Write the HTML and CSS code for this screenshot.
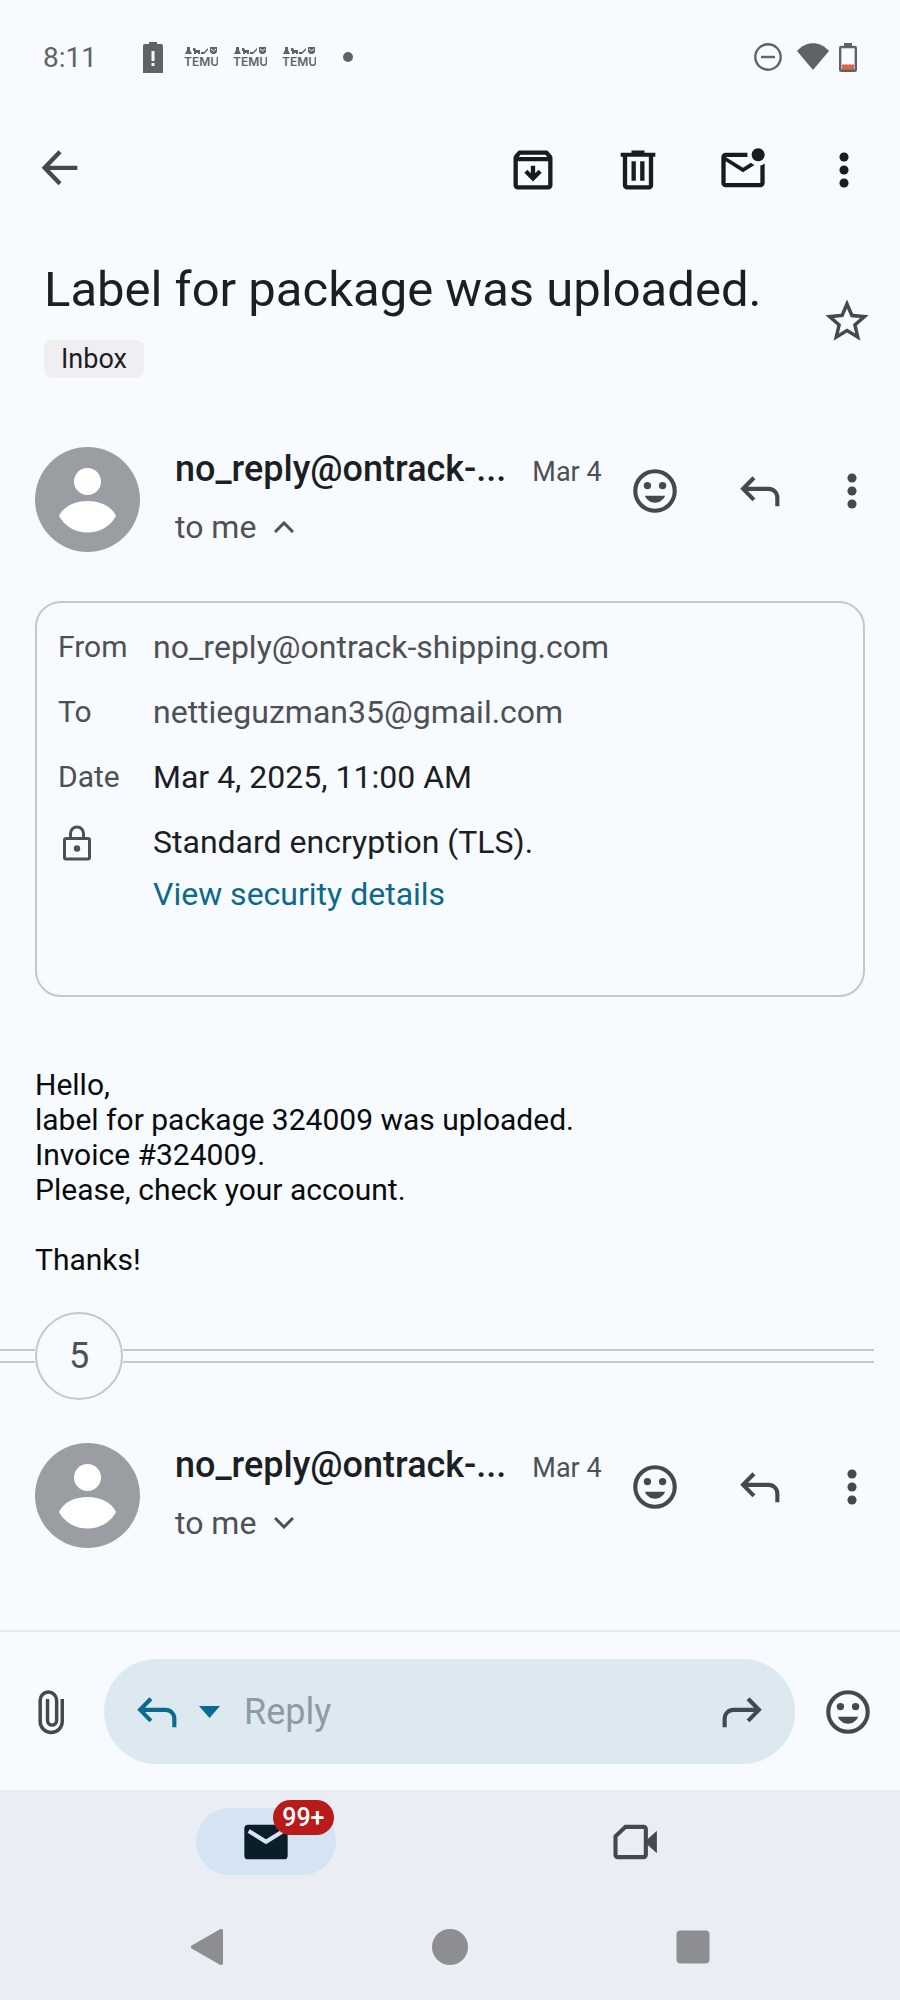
FILE: index.html
```html
<!DOCTYPE html>
<html lang="en">
  <head>
    <meta charset="UTF-8" />
    <meta name="viewport" content="width=device-width, initial-scale=1.0" />
    <title>Label for package was uploaded.</title>
    <link rel="stylesheet" href="styles.css">
  </head>

  <body>
    <!-- shared icons -->
    <svg class="sprite" aria-hidden="true">
      <symbol id="temu" viewBox="0 0 34 20">
        <path d="M3 0h3v3l2 4H1l2-4zM9 1h2l1 2h4v4h-2V6h-2v1h-2V4H9zM17 5h3l4-4v2l-4 4h-3zM26 0h7v5l-2 2h-3l-2-2z" fill="currentColor" />
        <path d="M27 2l2.500 2L32 2" fill="none" stroke="#f7fafe" />
        <text x="0" y="19">TEMU</text>
      </symbol>
      <symbol id="smile" viewBox="0 0 24 24">
        <circle cx="12" cy="12" r="9.1" fill="none" stroke="currentColor" stroke-width="1.9" />
        <circle cx="8.5" cy="9.5" r="1.7" fill="currentColor" />
        <circle cx="15.5" cy="9.5" r="1.7" fill="currentColor" />
        <path d="M7.3 14.2h9.4c-.9 2-2.6 3.2-4.7 3.2s-3.8-1.2-4.7-3.2z" fill="currentColor" />
      </symbol>
      <symbol id="reply" viewBox="0 0 24 24">
        <path d="M9.2 5.900 4.200 11l5 5.100M4.200 11H16a4 4 0 0 1 4 4v4" fill="none" stroke="currentColor" stroke-width="1.9" />
      </symbol>
      <symbol id="dots" viewBox="8 0 8 24">
        <circle cx="12" cy="6" r="2.1" fill="currentColor" />
        <circle cx="12" cy="12" r="2.1" fill="currentColor" />
        <circle cx="12" cy="18" r="2.1" fill="currentColor" />
      </symbol>
      <symbol id="avatar" viewBox="0 0 105 105">
        <circle cx="52.5" cy="52.5" r="52.5" fill="#9a9ea2" />
        <circle cx="52.5" cy="34.5" r="13.5" fill="#fff" />
        <path d="M24 69c9-20 48-20 57 0-12 22-45 22-57 0z" fill="#fff" />
      </symbol>
    </svg>

    <div class="status">
      <span class="time">8:11</span>
      <div class="notifications">
        <svg width="20" height="31" viewBox="0 0 20 31"><path d="M6 0h8v2h4a2 2 0 0 1 2 2v27H0V4a2 2 0 0 1 2-2h4z" fill="#5f6368" /><path d="M10 9v10M10 21v3" stroke="#f7fafe" stroke-width="3" /></svg>
        <svg class="temu"><use href="#temu" /></svg>
        <svg class="temu"><use href="#temu" /></svg>
        <svg class="temu"><use href="#temu" /></svg>
        <svg width="10" height="10" viewBox="0 0 10 10"><circle cx="5" cy="5" r="5" fill="#5f6368" /></svg>
      </div>
      <div class="system">
        <svg width="28" height="28" viewBox="0 0 28 28"><circle cx="14" cy="14" r="12.7" fill="none" stroke="#5f6368" stroke-width="2.4" /><path d="M7 14h14" stroke="#5f6368" stroke-width="2.4" /></svg>
        <svg class="wifi" width="32" height="28" viewBox="0 0 32 28"><path d="M0 8C9-2.500 23-2.500 32 8L16 27z" fill="#5f6368" /></svg>
        <svg width="18" height="29" viewBox="0 0 18 29"><path d="M5 0h8v3H5z" fill="#5f6368" /><path d="M3 21.500h12V27H3z" fill="#e0673f" /><rect x="1.2" y="4" width="15.6" height="23.8" rx="1" fill="none" stroke="#5f6368" stroke-width="2.4" /></svg>
      </div>
    </div>

    <header class="toolbar">
      <button class="icon back" aria-label="Back">
        <svg viewBox="0 1 24 24"><path d="M12 4.600 4.900 12l7.100 7.400M4.900 12H20" fill="none" stroke="currentColor" stroke-width="2" /></svg>
      </button>
      <button class="icon" aria-label="Archive">
        <svg viewBox="0 0 24 24"><path d="M20.540 5.230l-1.390-1.680C18.880 3.210 18.470 3 18 3H6c-.47 0-.88.210-1.160.55L3.460 5.230C3.170 5.570 3 6.020 3 6.500V19c0 1.100.9 2 2 2h14c1.100 0 2-.9 2-2V6.500c0-.48-.17-.93-.46-1.270zM6.240 5h11.520l.83 1H5.420l.82-1zM5 19V8h14v11z" fill="currentColor" /><path d="M12 10v6M8.700 12.600l3.300 3.300 3.300-3.300" fill="none" stroke="currentColor" stroke-width="2" /></svg>
      </button>
      <button class="icon" aria-label="Delete">
        <svg viewBox="0 0 24 24"><path d="M4 4h5V3h6v1h5v1.900H4z" fill="currentColor" /><path d="M6 5v14a1 1 0 0 0 1 1h10a1 1 0 0 0 1-1V5M10 8v9M14 8v9" fill="none" stroke="currentColor" stroke-width="2" /></svg>
      </button>
      <button class="icon" aria-label="Mark as unread">
        <svg viewBox="0 0 24 24"><path d="M22 8.980V18c0 1.100-.9 2-2 2H4c-1.100 0-2-.9-2-2V6c0-1.100.9-2 2-2h10.100c-.06.320-.1.660-.1 1s.04.680.1 1H4l8 5 3.670-2.290c.47.430 1.020.760 1.630.980L12 13 4 8v10h16V9.900c.74-.15 1.420-.48 2-.92zM16 5c0 1.660 1.340 3 3 3s3-1.340 3-3-1.340-3-3-3-3 1.340-3 3z" fill="currentColor" /></svg>
      </button>
      <button class="icon more" aria-label="More options"><svg><use href="#dots" /></svg></button>
    </header>

    <main>
      <div class="subject">
        <div>
          <h1>Label for package was uploaded.</h1>
          <span class="chip">Inbox</span>
        </div>
        <button class="icon" aria-label="Star">
          <svg viewBox="0 -1 24 24"><path d="M22 9.240l-7.190-.62L12 2 9.190 8.630 2 9.240l5.460 4.730L5.820 21 12 17.270 18.180 21l-1.630-7.030L22 9.240zM12 15.400l-3.760 2.270 1-4.280-3.320-2.880 4.380-.38L12 6.100l1.710 4.040 4.380.38-3.320 2.880 1 4.280L12 15.400z" fill="currentColor" /></svg>
        </button>
      </div>

      <section class="message">
        <svg class="avatar"><use href="#avatar" /></svg>
        <div class="sender">
          <div class="name-row">
            <span class="name">no_reply@ontrack-...</span>
            <span class="date">Mar 4</span>
          </div>
          <button class="to">to me
            <svg width="20" height="12" viewBox="0 0 20 12"><path d="M1 11l9-9 9 9" fill="none" stroke="currentColor" stroke-width="3" /></svg>
          </button>
        </div>
        <div class="actions">
          <button class="icon" aria-label="Add reaction"><svg><use href="#smile" /></svg></button>
          <button class="icon" aria-label="Reply"><svg><use href="#reply" /></svg></button>
          <button class="icon more" aria-label="More"><svg><use href="#dots" /></svg></button>
        </div>
      </section>

      <dl class="details">
        <dt>From</dt>
        <dd class="address">no_reply@ontrack-shipping.com</dd>
        <dt>To</dt>
        <dd class="address">nettieguzman35@gmail.com</dd>
        <dt>Date</dt>
        <dd>Mar 4, 2025, 11:00 AM</dd>
        <dt>
          <svg class="lock" viewBox="0 0 28 36" role="img" aria-label="Security"><rect x="1.5" y="13.5" width="25" height="20.5" rx="1.5" fill="none" stroke="currentColor" stroke-width="3" /><path d="M7.500 13V8.500a6.500 6.500 0 0 1 13 0V13" fill="none" stroke="currentColor" stroke-width="3" /><circle cx="14" cy="23.5" r="3.2" fill="currentColor" /></svg>
        </dt>
        <dd>Standard encryption (TLS).<br><a href="#">View security details</a></dd>
      </dl>

      <div class="body">
        Hello,<br>
        label for package 324009 was uploaded.<br>
        Invoice #324009.<br>
        Please, check your account.<br>
        <br>
        Thanks!
      </div>

      <div class="collapsed">
        <button class="count" aria-label="Show 5 messages">5</button>
      </div>

      <section class="message">
        <svg class="avatar"><use href="#avatar" /></svg>
        <div class="sender">
          <div class="name-row">
            <span class="name">no_reply@ontrack-...</span>
            <span class="date">Mar 4</span>
          </div>
          <button class="to">to me
            <svg width="20" height="12" viewBox="0 0 20 12"><path d="M1 1l9 9 9-9" fill="none" stroke="currentColor" stroke-width="3" /></svg>
          </button>
        </div>
        <div class="actions">
          <button class="icon" aria-label="Add reaction"><svg><use href="#smile" /></svg></button>
          <button class="icon" aria-label="Reply"><svg><use href="#reply" /></svg></button>
          <button class="icon more" aria-label="More"><svg><use href="#dots" /></svg></button>
        </div>
      </section>
    </main>

    <footer>
      <form class="reply-bar">
        <button type="button" class="icon" aria-label="Attach file">
          <svg viewBox="0 0 24 24"><path d="M17.200 6v10.400a5.100 5.100 0 0 1-10.200 0V6.600a3.800 3.800 0 0 1 7.600 0v9.300a2.100 2.100 0 0 1-4.200 0V6" fill="none" stroke="currentColor" stroke-width="1.6" /></svg>
        </button>
        <div class="reply-box">
          <button type="button" class="icon blue" aria-label="Reply"><svg><use href="#reply" /></svg></button>
          <button type="button" class="caret" aria-label="Reply type">
            <svg width="21" height="12" viewBox="0 0 21 12"><path d="M0 0h21L10.500 12z" fill="currentColor" /></svg>
          </button>
          <input type="text" placeholder="Reply" aria-label="Reply">
          <button type="button" class="icon forward" aria-label="Forward">
            <svg viewBox="0 0 24 24"><path d="M14.800 5.900l5 5.100-5 5.100M19.800 11H8a4 4 0 0 0-4 4v4" fill="none" stroke="currentColor" stroke-width="1.9" /></svg>
          </button>
        </div>
        <button type="button" class="icon" aria-label="Emoji"><svg><use href="#smile" /></svg></button>
      </form>

      <nav class="tabs">
        <a href="#" class="tab active" aria-label="Mail">
          <svg viewBox="0 0 24 24"><rect x="2" y="4" width="20" height="16" rx="1.7" fill="#0b1d29" /><path d="M4 6.900l8 5 8-5" fill="none" stroke="#d4e4f2" stroke-width="1.9" /></svg>
          <span class="badge">99+</span>
        </a>
        <a href="#" class="tab" aria-label="Meet">
          <svg viewBox="0 0 24 24"><path d="M7.600 5H16a1 1 0 0 1 1 1v12a1 1 0 0 1-1 1H4a1 1 0 0 1-1-1V9.400z" fill="none" stroke="currentColor" stroke-width="1.9" /><path d="M22.100 6.800v10.400L17.500 13v-2z" fill="currentColor" /></svg>
        </a>
      </nav>

      <div class="system-nav">
        <button aria-label="Back"><svg viewBox="0 0 36 36"><path d="M32 2v32L4 18z" fill="#8c8e92" stroke="#8c8e92" stroke-width="4" stroke-linejoin="round" /></svg></button>
        <button aria-label="Home"><svg viewBox="0 0 36 36"><circle cx="18" cy="18" r="18" fill="#8c8e92" /></svg></button>
        <button aria-label="Recent apps"><svg viewBox="0 0 36 36"><rect x="1.5" y="1.5" width="33" height="33" rx="4" fill="#8c8e92" /></svg></button>
      </div>
    </footer>
  </body>
</html>
```

FILE: styles.css
```css
* {
  box-sizing: border-box;
}

body {
  margin: 0;
  min-height: 100vh;
  display: flex;
  flex-direction: column;
  background-color: #f7fafe;
  color: #1b1f23;
  font-family: Roboto, "Liberation Sans", sans-serif;
  font-size: 30px;
}

button {
  border: none;
  padding: 0;
  background: none;
  color: inherit;
  font: inherit;
  cursor: pointer;
}

svg {
  display: block;
  flex: none;
}

.sprite {
  display: none;
}

.icon {
  flex: none;
  width: 52px;
  height: 52px;
  color: #45484c;
}

.icon svg {
  width: 52px;
  height: 52px;
}

.icon.more svg {
  width: 18px;
  margin: 0 auto;
}

/* status bar */
.status {
  display: flex;
  align-items: center;
  height: 114px;
  padding: 0 43px;
  color: #5f6368;
}

.time {
  width: 100px;
  font-size: 28px;
}

.notifications {
  display: flex;
  align-items: center;
  gap: 15px;
}

.notifications svg:first-child {
  margin-right: 6px;
}

.notifications svg:last-child {
  margin-left: 12px;
}

.temu {
  width: 34px;
  height: 20px;
  font-family: Inter, sans-serif;
  font-size: 12px;
  font-weight: 600;
  fill: currentColor;
}

.system {
  display: flex;
  align-items: center;
  gap: 10px;
  margin-left: auto;
}

.wifi {
  margin-left: 5px;
}

/* top actions */
.toolbar {
  display: flex;
  align-items: center;
  gap: 53px;
  height: 112px;
  padding: 0 34px;
}

.toolbar .icon {
  color: #181c20;
}

.toolbar .back {
  margin-right: auto;
  color: #45484c;
}

.toolbar .more {
  width: 44px;
}

.subject {
  display: flex;
  align-items: center;
  justify-content: space-between;
  padding: 34px 27px 0 44px;
}

h1 {
  margin: 0;
  font-size: 49px;
  font-weight: 400;
  line-height: 60px;
}

.chip {
  display: inline-block;
  margin-top: 20px;
  padding: 0 17px;
  border-radius: 8px;
  background-color: #efeff2;
  font-size: 27px;
  line-height: 38px;
}

/* message header */
.message {
  display: flex;
  align-items: flex-start;
  margin-top: 69px;
  padding: 0 35px;
}

.avatar {
  width: 105px;
  height: 105px;
}

.sender {
  flex: 1;
  min-width: 0;
  margin-left: 35px;
}

.name-row {
  display: flex;
  align-items: baseline;
  gap: 26px;
  line-height: 44px;
  white-space: nowrap;
}

.name {
  font-size: 36px;
  font-weight: 500;
}

.date {
  color: #4d5054;
  font-size: 27px;
}

.to {
  display: flex;
  align-items: center;
  gap: 18px;
  margin-top: 10px;
  color: #4d5054;
  font-size: 32px;
  line-height: 46px;
}

.actions {
  display: flex;
  gap: 53px;
  margin-top: 18px;
}

.actions .more {
  width: 26px;
}

/* sender details */
.details {
  display: grid;
  grid-template-columns: 95px 1fr;
  row-gap: 13px;
  margin: 49px 35px 0;
  padding: 18px 21px 75px;
  border: 2px solid #c5c8cb;
  border-radius: 26px;
  font-size: 32px;
  line-height: 52px;
}

.details dt,
.details .address {
  color: #4d5054;
}

.details dt {
  font-size: 30px;
}

.details dd {
  margin: 0;
}

.details a {
  color: #0b6a8b;
  text-decoration: none;
}

.lock {
  width: 28px;
  height: 36px;
  margin: 9px 0 0 5px;
}

.body {
  margin: 70px 35px 0;
  color: #0a0b0c;
  line-height: 35px;
}

/* collapsed messages */
.collapsed {
  display: flex;
  align-items: center;
  margin: 35px 26px 0 0;
}

.collapsed::before,
.collapsed::after {
  content: "";
  height: 10px;
  border: solid #c5c8cb;
  border-width: 2px 0;
}

.collapsed::before {
  width: 35px;
}

.collapsed::after {
  flex: 1;
}

.count {
  width: 88px;
  height: 88px;
  border: 2px solid #c5c8cb;
  border-radius: 50%;
  color: #4d5054;
  font-size: 36px;
}

.collapsed + .message {
  margin-top: 43px;
}

/* reply bar */
footer {
  margin-top: auto;
}

.reply-bar {
  display: flex;
  align-items: center;
  gap: 27px;
  padding: 27px 26px 26px 25px;
  border-top: 2px solid #e4e8ec;
}

.reply-box {
  flex: 1;
  min-width: 0;
  display: flex;
  align-items: center;
  height: 105px;
  padding: 0 27px;
  border-radius: 53px;
  background-color: #dce9f0;
}

.icon.blue,
.caret {
  color: #0b6a8f;
}

.caret {
  margin: 0 24px 0 16px;
}

.reply-box input {
  flex: 1;
  min-width: 0;
  border: none;
  padding: 0;
  background: none;
  outline: none;
  color: #1b1f23;
  font: inherit;
  font-size: 36px;
}

.reply-box input::placeholder {
  color: #8f9ba2;
}

.icon.forward {
  color: #3e4b53;
}

/* app tabs */
.tabs {
  display: flex;
  justify-content: space-around;
  padding: 18px 81px 0;
  background-color: #ebedf5;
}

.tab {
  position: relative;
  display: flex;
  align-items: center;
  justify-content: center;
  width: 140px;
  height: 67px;
  border-radius: 34px;
  color: #45484c;
}

.tab svg {
  width: 52px;
  height: 52px;
}

.tab.active {
  background-color: #d4e4f2;
}

.badge {
  position: absolute;
  top: -8px;
  right: 2px;
  padding: 0 9px;
  border-radius: 18px;
  background-color: #b91a1a;
  color: #fff;
  font-size: 25px;
  font-weight: 500;
  line-height: 35px;
}

.system-nav {
  display: flex;
  justify-content: space-around;
  padding: 54px 86px 35px;
  background-color: #ebedf5;
}

.system-nav svg {
  width: 36px;
  height: 36px;
}
```
